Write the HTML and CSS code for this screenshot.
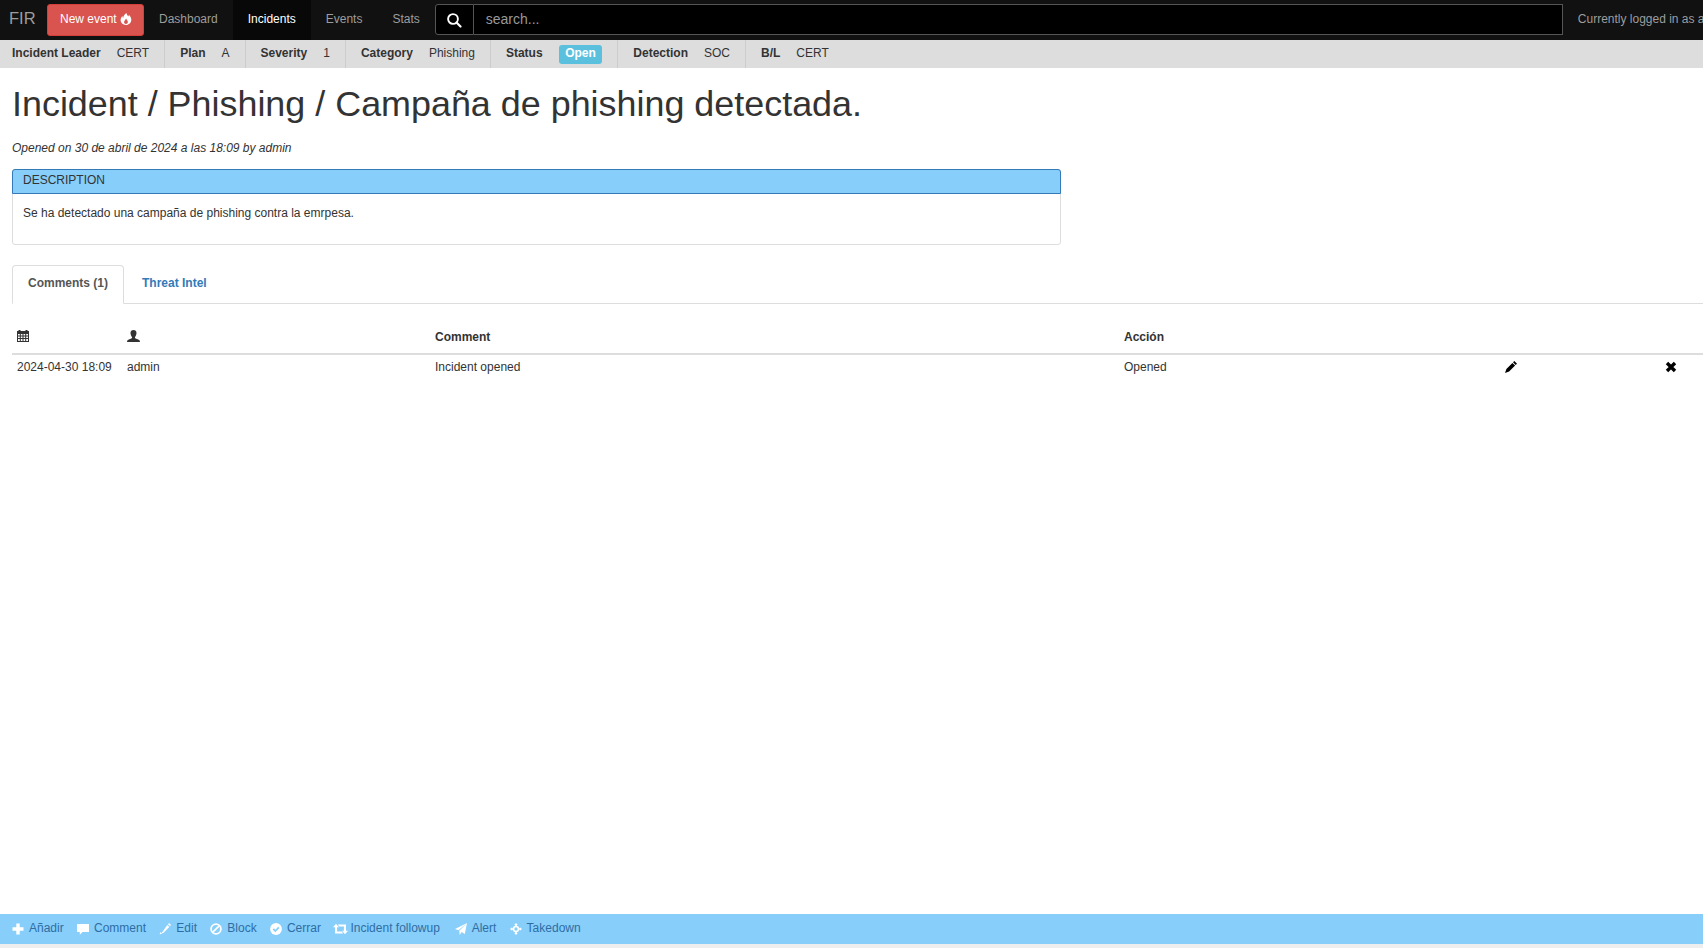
FILE: index.html
```html
<!DOCTYPE html>
<html lang="es">
<head>
  <meta charset="UTF-8">
  <title>FIR - Incident</title>
  <link rel="stylesheet" href="styles.css">
</head>
<body>
  <nav class="navbar">
    <a class="brand" href="#">FIR</a>
    <a class="btn-new" href="#">New event
      <svg class="icon" viewBox="0 0 14 14"><path fill="#fff" fill-rule="evenodd" d="M7.500 0c.3 1.800 1.300 2.800 2.400 4 .3-.6.4-1.300.3-2.100 1.700 1.500 3 3.700 3 6 0 3.400-2.700 6.100-6.300 6.100S.7 11.300.7 8.300c0-2 1-3.500 2.200-4.800 0 1 .2 1.800.8 2.400C3.900 3.500 5.300 1.300 7.500 0zM7.100 6.500c-.3 1.300-2.300 2.500-2.300 4.300 0 1.200 1 2 2.100 2s2.300-.9 2.300-2.300c0-1.700-1.700-2.500-2.100-4z"/></svg>
    </a>
    <ul class="nav-links">
      <li><a href="#">Dashboard</a></li>
      <li class="active"><a href="#">Incidents</a></li>
      <li><a href="#">Events</a></li>
      <li><a href="#">Stats</a></li>
    </ul>
    <form class="search">
      <span class="search-btn">
        <svg viewBox="0 0 16 16" width="16" height="16"><circle cx="7" cy="7" r="4.900" fill="none" stroke="#fff" stroke-width="1.900"/><path d="M10.500 10.500l4 4" stroke="#fff" stroke-width="2.200" stroke-linecap="round"/></svg>
      </span>
      <input class="search-input" type="text" placeholder="search...">
    </form>
    <span class="logged">Currently logged in as admin</span>
  </nav>

  <div class="details">
    <div class="detail"><b>Incident Leader</b><span>CERT</span></div>
    <div class="detail"><b>Plan</b><span>A</span></div>
    <div class="detail"><b>Severity</b><span>1</span></div>
    <div class="detail"><b>Category</b><span>Phishing</span></div>
    <div class="detail"><b>Status</b><span class="label-open">Open</span></div>
    <div class="detail"><b>Detection</b><span>SOC</span></div>
    <div class="detail last"><b>B/L</b><span>CERT</span></div>
  </div>

  <main class="content">
    <h1>Incident / Phishing / Campaña de phishing detectada.</h1>
    <p class="opened">Opened on 30 de abril de 2024 a las 18:09 by admin</p>

    <div class="panel">
      <div class="panel-heading">DESCRIPTION</div>
      <div class="panel-body">Se ha detectado una campaña de phishing contra la emrpesa.</div>
    </div>

    <ul class="tabs">
      <li class="active"><a href="#">Comments (1)</a></li>
      <li><a href="#">Threat Intel</a></li>
    </ul>

    <table class="comments">
      <thead>
        <tr>
          <th class="col-date">
            <svg class="icon" viewBox="0 0 12 12"><path fill="#333" fill-rule="evenodd" d="M0 1h1.500V0h2v1h5V0h2v1H12v11H0zM1 4v1.500h1.800V4zm2.800 0v1.500h1.700V4zm2.700 0v1.500h1.700V4zM9.200 4v1.500H11V4zM1 6.500V8h1.800V6.500zm2.800 0V8h1.700V6.500zm2.700 0V8h1.700V6.500zm2.700 0V8H11V6.500zM1 9v2h1.800V9zm2.800 0v2h1.700V9zm2.700 0v2h1.700V9zM9.200 9v2H11V9z"/></svg>
          </th>
          <th class="col-user">
            <svg class="icon user" viewBox="0 0 13 12"><path fill="#333" d="M6.500 0c1.900 0 3 1.300 3 3.100 0 1.700-1 3.700-1.600 4.100 0 1 .6 1.300 2.100 1.800 1.600.5 3 1 3 3H0c0-2 1.400-2.500 3-3 1.500-.5 2.100-.8 2.100-1.800C4.500 6.800 3.500 4.800 3.500 3.100 3.500 1.300 4.600 0 6.500 0z"/></svg>
          </th>
          <th class="col-comment">Comment</th>
          <th class="col-action">Acción</th>
          <th class="col-edit"></th>
          <th></th>
        </tr>
      </thead>
      <tbody>
        <tr>
          <td>2024-04-30 18:09</td>
          <td>admin</td>
          <td>Incident opened</td>
          <td>Opened</td>
          <td>
            <svg class="icon" viewBox="0 0 12 12"><path fill="#000" d="M9.300 0L12 2.700l-1.300 1.300L8 1.300zM7.400 1.900l2.700 2.700-6 6L0 12l1.400-4.100z"/></svg>
          </td>
          <td>
            <svg class="icon" viewBox="0 0 12 12"><path d="M2 2l8 8m0-8l-8 8" fill="none" stroke="#000" stroke-width="3.400"/></svg>
          </td>
        </tr>
      </tbody>
    </table>
  </main>

  <div class="actions">
    <a href="#"><svg class="icon" viewBox="0 0 12 12"><path fill="#fff" d="M4.300 .5h3.400v3.800h3.800v3.400H7.700v3.800H4.300V7.700H.5V4.300h3.800z"/></svg>Añadir</a>
    <a href="#"><svg class="icon" viewBox="0 0 12 12"><path fill="#fff" d="M0 1h12v8H5.500L2.800 11.800V9H0z"/></svg>Comment</a>
    <a href="#"><svg class="icon" viewBox="0 0 12 12"><path fill="#fff" d="M10 0l2 2-1 1.200-2-2zM8.300 1.900l2 2-6 6-2 .7zM1.600 9l1.400 1.400-2.500 1.100z"/></svg>Edit</a>
    <a href="#"><svg class="icon" viewBox="0 0 12 12"><circle cx="6" cy="6" r="4.900" fill="none" stroke="#fff" stroke-width="1.800"/><path d="M2.800 9.200l6.400-6.400" stroke="#fff" stroke-width="1.800"/></svg>Block</a>
    <a href="#"><svg class="icon" viewBox="0 0 12 12"><circle cx="6" cy="6" r="5.900" fill="#fff"/><path d="M3.300 5.800L5.400 8l3.400-3.600" fill="none" stroke="#87cefa" stroke-width="1.800"/></svg>Cerrar</a>
    <a href="#"><svg class="icon wide" viewBox="0 0 15 12"><path fill="#fff" d="M3 .8L6 4.200H4.100v4.300h4.600l1.500 1.900H2V4.200H0zM12 11.200L9 7.800h1.900V3.500H6.300L4.800 1.600H13v6.200h2z"/></svg>Incident followup</a>
    <a href="#"><svg class="icon alert" viewBox="0 0 12 12"><path fill="#fff" d="M12 0L9.800 11 6.600 9 4.700 12 4.300 7.800zM12 0L3.500 7.200 0 6z"/></svg>Alert</a>
    <a href="#"><svg class="icon" viewBox="0 0 12 12"><path fill="#fff" fill-rule="evenodd" d="M6 0l1.800 2.100H6.800v.6a3.400 3.400 0 0 1 2.500 2.500h.6V4.200L12 6 9.900 7.800v-1h-.6a3.400 3.400 0 0 1-2.500 2.500v.6h1L6 12 4.200 9.900h1v-.6a3.400 3.400 0 0 1-2.500-2.500h-.6v1L0 6l2.100-1.800v1h.6a3.400 3.400 0 0 1 2.500-2.500v-.6h-1zM6 4.300a1.700 1.700 0 1 0 0 3.400 1.700 1.700 0 0 0 0-3.400z"/></svg>Takedown</a>
  </div>
  <div class="page-end"></div>
</body>
</html>
```

FILE: styles.css
```css
html, body {
  height: 100%;
}

body {
  margin: 0;
  font-family: "Liberation Sans", Arial, sans-serif;
  font-size: 12px;
  line-height: 17px;
  color: #333;
  background: #fff;
  display: flex;
  flex-direction: column;
  height: 948px;
  overflow: hidden;
}

a {
  text-decoration: none;
}

.icon {
  width: 12px;
  height: 12px;
  vertical-align: -2px;
}

.icon.user {
  width: 13px;
}

.navbar {
  height: 40px;
  background: #111;
  display: flex;
  align-items: stretch;
  flex: none;
  white-space: nowrap;
}

.navbar > * {
  flex: none;
}

.brand {
  color: #9d9d9d;
  font-size: 16.500px;
  line-height: 37px;
  padding-left: 9px;
  width: 38px;
}

.btn-new {
  background: #d9534f;
  color: #fff;
  border-radius: 3px;
  margin: 4px 0;
  width: 83px;
  padding: 0 0 0 12px;
  line-height: 28px;
  border: 1px solid #d43f3a;
}

.nav-links {
  list-style: none;
  margin: 0;
  padding: 0;
  display: flex;
}

.nav-links a {
  display: block;
  color: #9d9d9d;
  padding: 0 15px;
  line-height: 38px;
}

.nav-links .active a {
  background: #080808;
  color: #fff;
  height: 40px;
}

.search {
  display: flex;
  margin: 4px 0 5px;
  width: 1128px;
}

.search-btn {
  width: 39px;
  background: #000;
  border: 1px solid #555;
  border-radius: 3px 0 0 3px;
  display: flex;
  align-items: center;
  justify-content: center;
  box-sizing: border-box;
  flex: none;
}

.search-input {
  flex: 1;
  min-width: 0;
  background: #000;
  border: 1px solid #555;
  border-left: 0;
  padding: 0 12px 2px;
  color: #fff;
  font: 14px "Liberation Sans", Arial, sans-serif;
  outline: none;
}

.search-input::placeholder {
  color: #999;
}

.logged {
  color: #9d9d9d;
  padding-left: 15px;
  line-height: 38px;
}

.details {
  height: 28px;
  background: #ddd;
  flex: none;
  display: flex;
  white-space: nowrap;
  padding-left: 12px;
}

.detail {
  display: flex;
  align-items: center;
  gap: 16px;
  padding-right: 15px;
  margin-right: 15px;
  border-right: 1px solid #ccc;
  height: 28px;
  padding-bottom: 2px;
  box-sizing: border-box;
}

.detail.last {
  border-right: 0;
}

.detail b {
  font-weight: bold;
}

.label-open {
  background: #5bc0de;
  color: #fff;
  font-weight: bold;
  padding: 1px 6.500px 3px;
  line-height: 15px;
  border-radius: 3px;
  margin-top: 3px;
}

.content {
  flex: 1;
  padding: 0 0 0 12px;
  min-height: 0;
}

h1 {
  font-size: 35.900px;
  font-weight: 500;
  line-height: 40px;
  margin: 16px 0 0;
}

.opened {
  font-style: italic;
  margin: 16px 0 0;
}

.panel {
  width: 1049px;
  margin-top: 12px;
  border: 1px solid #ddd;
  border-radius: 3px;
  box-sizing: border-box;
  height: 76px;
}

.panel-heading {
  background: #87cefa;
  border: 1px solid #337ab7;
  margin: -1px -1px 0;
  height: 25px;
  padding: 2px 10px;
  box-sizing: border-box;
  border-radius: 3px 3px 0 0;
}

.panel-body {
  padding: 11px 10px;
}

.tabs {
  list-style: none;
  margin: 20px 0 0;
  padding: 0;
  display: flex;
  height: 38px;
  border-bottom: 1px solid #ddd;
}

.tabs a {
  display: block;
  font-weight: bold;
  color: #337ab7;
  padding: 9px 15px;
  margin-right: 2px;
  height: 39px;
  box-sizing: border-box;
  border: 1px solid transparent;
}

.tabs .active a {
  color: #555;
  background: #fff;
  border-color: #ddd #ddd #fff;
  border-radius: 4px 4px 0 0;
}

.comments {
  width: 100%;
  margin-top: 15px;
  border-collapse: collapse;
  table-layout: fixed;
}

.comments th {
  text-align: left;
  font-weight: bold;
  padding: 8px 5px 6px;
  border-bottom: 2px solid #ddd;
  height: 20px;
}

.comments th .icon {
  vertical-align: -1px;
}

.comments td {
  padding: 4px 5px;
}

.col-date {
  width: 100px;
}

.col-user {
  width: 298px;
}

.col-comment {
  width: 679px;
}

.col-action {
  width: 371px;
}

.col-edit {
  width: 150px;
}

.actions {
  flex: none;
  height: 30px;
  background: #87cefa;
  display: flex;
  align-items: center;
  gap: 13.300px;
  padding: 0 0 1px 12px;
  box-sizing: border-box;
}

.actions a {
  color: #2e6da4;
  display: flex;
  align-items: center;
  gap: 5px;
}

.actions .wide {
  width: 15px;
  margin: 0 -2.300px 0 -1.500px;
}

.actions .alert {
  margin-left: 1.500px;
}

.page-end {
  flex: none;
  height: 4px;
  background: #eee;
}
```
